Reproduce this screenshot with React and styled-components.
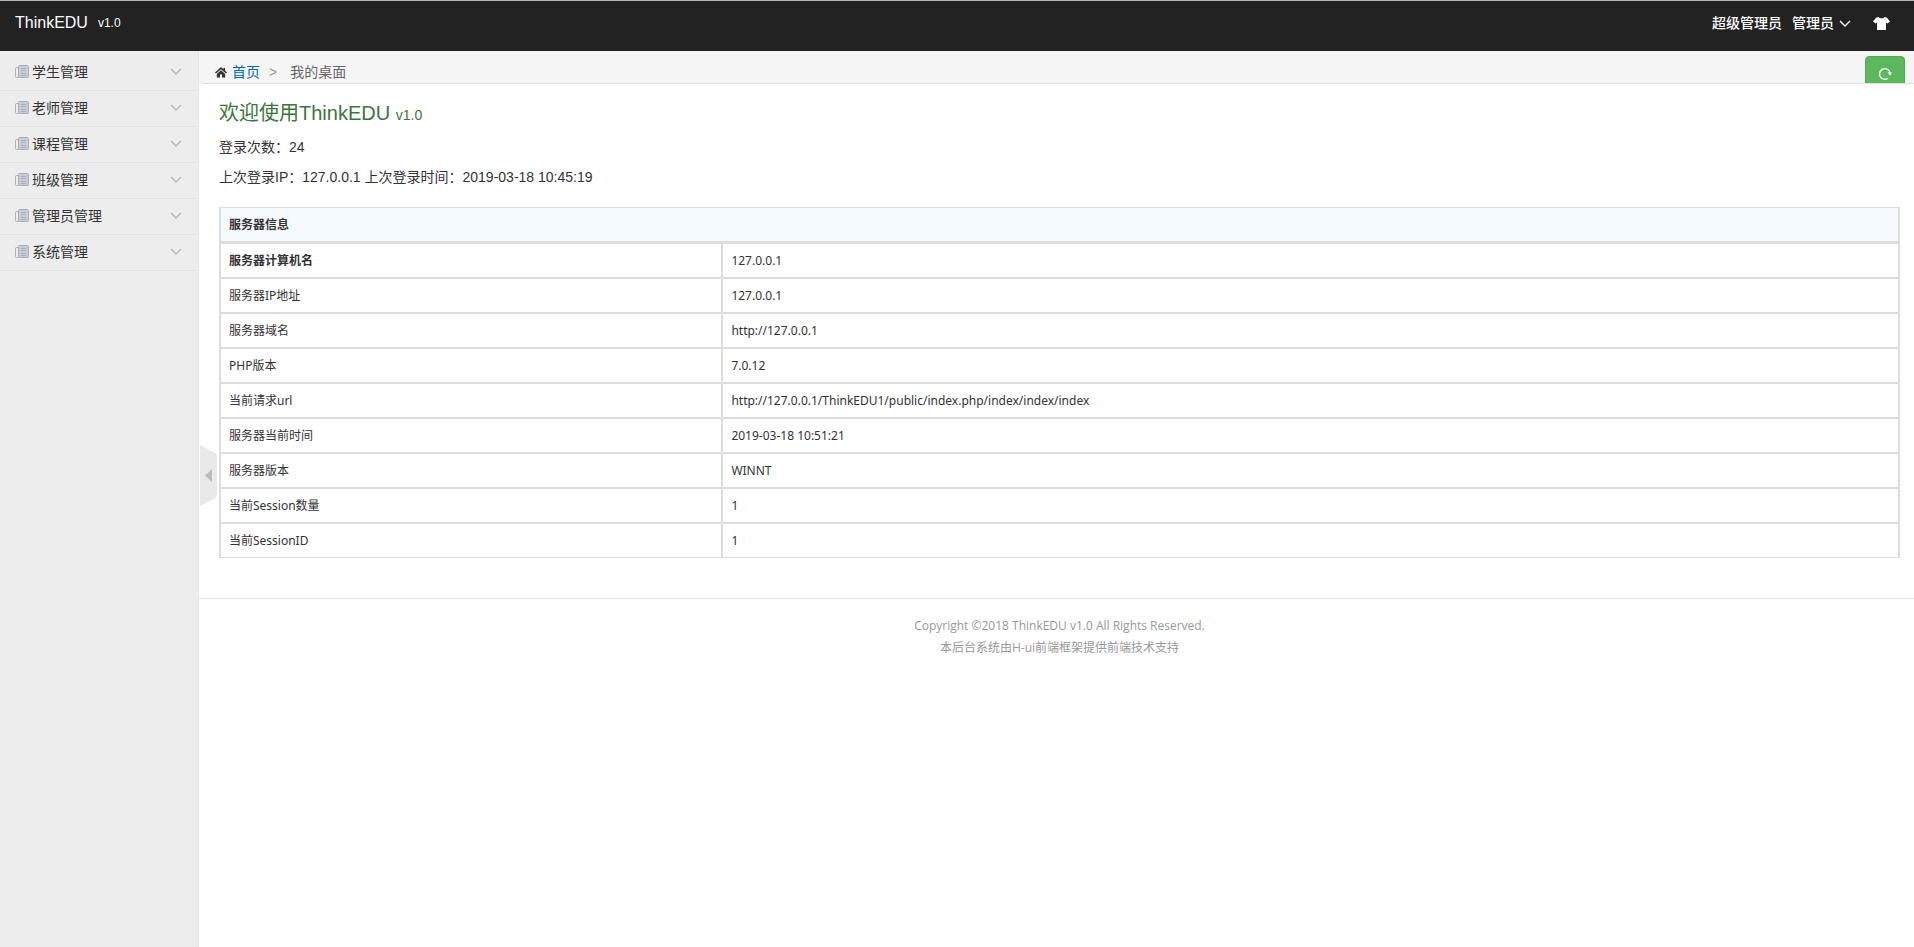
import React from "react";
import styled, { createGlobalStyle } from "styled-components";

const GlobalStyle = createGlobalStyle`
  * {
    box-sizing: border-box;
  }
  body {
    margin: 0;
    background: #fff;
    color: #333;
    font-family: "Liberation Sans", "Noto Sans CJK SC", sans-serif;
    font-size: 14px;
    line-height: 24px;
  }
  a {
    color: inherit;
    text-decoration: none;
  }
`;

const Page = styled.div`
  display: flex;
  flex-direction: column;
  min-height: 100vh;
`;

const Navbar = styled.header`
  display: flex;
  justify-content: space-between;
  height: 51px;
  padding: 6px 24px 0 15px;
  border-top: 1px solid #b4b4b4;
  background: #222;
  color: #fff;
`;

const Brand = styled.div`
  display: flex;
  align-items: center;
  gap: 10px;
  height: 32px;
`;

const Logo = styled.a`
  font-size: 16px;
`;

const Version = styled.span`
  font-size: 12px;
`;

const UserBar = styled.nav`
  display: flex;
  align-items: center;
  gap: 10px;
  height: 32px;
  font-weight: 500;
`;

const UserButton = styled.button`
  display: flex;
  align-items: center;
  gap: 5px;
  padding: 0;
  border: none;
  background: none;
  color: #fff;
  font: inherit;
`;

const SkinButton = styled(UserButton)`
  margin-left: 12px;
`;

const Body = styled.div`
  display: flex;
  flex: 1;
`;

const Sidebar = styled.aside`
  flex: none;
  width: 199px;
  padding-top: 4px;
  border-right: 1px solid #e5e5e5;
  background: #ededed;
`;

const MenuItem = styled.button`
  display: flex;
  align-items: center;
  width: 100%;
  height: 36px;
  padding: 0 16px 2px 15px;
  border: none;
  border-bottom: 1px solid #e2e2e2;
  background: none;
  color: #333;
  font: inherit;
`;

const MenuLabel = styled.span`
  flex: 1;
  padding-left: 3px;
  text-align: left;
`;

const Main = styled.main`
  position: relative;
  flex: 1;
  min-width: 0;
`;

const Breadcrumb = styled.nav`
  display: flex;
  justify-content: space-between;
  height: 33px;
  padding: 0 9px 0 16px;
  overflow: hidden;
  border-bottom: 1px solid #e5e5e5;
  border-bottom-left-radius: 4px;
  background: #f5f5f5;
`;

const Crumbs = styled.div`
  display: flex;
  align-items: center;
  padding-top: 9px;
  height: 33px;
  color: #666;
`;

const HomeLink = styled.a`
  padding-left: 5px;
  color: #06c;
`;

const Separator = styled.span`
  padding: 0 13px 0 9px;
  color: #999;
`;

const RefreshButton = styled.button`
  flex: none;
  display: flex;
  justify-content: center;
  width: 40px;
  height: 34px;
  margin-top: 5px;
  padding: 10px 0 0;
  border: 1px solid #4cae4c;
  border-radius: 4px;
  background: #5cb85c;
  color: #fff;
`;

const Content = styled.article`
  padding: 14px 14px 40px 20px;
`;

const Welcome = styled.h1`
  margin: 0 0 4px;
  color: #3c763d;
  font-size: 20px;
  font-weight: 400;
  line-height: 31px;
`;

const Small = styled.span`
  font-size: 14px;
`;

const Line = styled.p`
  margin: 0 0 6px;
`;

const InfoTable = styled.table`
  width: 100%;
  margin-top: 18px;
  border: 1px solid #ddd;
  border-right-width: 2px;
  border-spacing: 0;
  table-layout: fixed;
  font-family: "Noto Sans", "Noto Sans CJK SC", sans-serif;
  font-size: 12px;
  line-height: 17px;
  text-align: left;
`;

const NameCol = styled.col`
  width: 30%;
`;

const Cell = styled.td`
  padding: 8px;
  border-bottom: 2px solid #ddd;

  tr:last-child > & {
    border-bottom: none;
  }
`;

const NameCell = styled(Cell)`
  border-left: 1px solid #ddd;
  border-right: 2px solid #ddd;
  font-weight: ${(props) => (props.$strong ? 700 : 400)};
`;

const HeadCell = styled.th`
  padding: 8px;
  border-left: 1px solid #ddd;
  border-bottom: 3px solid #ddd;
  background: #f5fafe;
`;

const Footer = styled.footer`
  padding: 16px 14px 16px 20px;
  border-top: 1px solid #e5e5e5;
  color: #999;
  font-family: "Open Sans", "Noto Sans CJK SC", sans-serif;
  font-size: 12px;
  line-height: 22px;
  text-align: center;
`;

// the handle that folds the side menu, lies over the content's left edge
const FoldHandle = styled.button`
  position: absolute;
  left: 1px;
  top: 394px;
  padding: 0;
  border: none;
  background: none;
  line-height: 0;
`;

const ChevronIcon = ({ color }) => (
  <svg width="12" height="7" viewBox="0 0 12 7" fill="none" stroke={color} strokeWidth="1.4">
    <path d="M1 1l5 5 5-5" />
  </svg>
);

const NewsIcon = () => (
  <svg width="14" height="14" viewBox="0 0 14 14" fill="none" stroke="#a9b0ba">
    <path d="M3.5 2.5h-2a1 1 0 0 0-1 1v8a1 1 0 0 0 1 1h2" />
    <rect x="3.5" y="0.5" width="10" height="12" rx="1" fill="#c9cdd3" />
    <path d="M6 3.500h5M6 5.500h5M6 8.500h5M6 10.500h5" />
  </svg>
);

const HomeIcon = () => (
  <svg width="12" height="11" viewBox="0 0 12 11" fill="#333">
    <path d="M6 0L0 5.400l1 1.200L6 2.200l5 4.400 1-1.200L10 3.600V1H8.500v1.300z" />
    <path d="M6 3.300L1.800 7v3.500H5v-3h2v3h3.200V7z" />
  </svg>
);

const ShirtIcon = () => (
  <svg width="17" height="13" viewBox="0 0 17 13" fill="#fff">
    <path d="M5.500 0c1 1.700 5 1.700 6 0L14 .8l3 3.600-2.500 2.200L13 5.500V13H4V5.500L2.500 6.600 0 4.400 3 .8z" />
  </svg>
);

const RefreshIcon = () => (
  <svg width="14" height="14" viewBox="0 0 14 14" fill="none" stroke="#fff" strokeWidth="1.4">
    <path d="M10 11.200A5.300 5.300 0 1 1 12 6" />
    <path d="M9.500 5.400H14L12 8.400z" fill="#fff" stroke="none" />
  </svg>
);

const FoldIcon = () => (
  <svg width="17" height="61" viewBox="0 0 17 61">
    <path d="M0 0l15 8q2 1 2 3v39q0 2-2 3L0 61z" fill="#e9e9e9" />
    <path d="M12 24v13l-7-6.500z" fill="#bbb" />
  </svg>
);

const menu = ["学生管理", "老师管理", "课程管理", "班级管理", "管理员管理", "系统管理"];

const serverInfo = [
  ["服务器计算机名", "127.0.0.1"],
  ["服务器IP地址", "127.0.0.1"],
  ["服务器域名", "http://127.0.0.1"],
  ["PHP版本", "7.0.12"],
  ["当前请求url", "http://127.0.0.1/ThinkEDU1/public/index.php/index/index/index"],
  ["服务器当前时间", "2019-03-18 10:51:21"],
  ["服务器版本", "WINNT"],
  ["当前Session数量", "1"],
  ["当前SessionID", "1"],
];

const ServerTable = () => {
  return (
    <InfoTable>
      <colgroup>
        <NameCol />
        <col />
      </colgroup>
      <thead>
        <tr>
          <HeadCell colSpan={2}>服务器信息</HeadCell>
        </tr>
      </thead>
      <tbody>
        {serverInfo.map(([name, value], i) => (
          <tr key={name}>
            <NameCell as="th" scope="row" $strong={i === 0}>
              {name}
            </NameCell>
            <Cell>{value}</Cell>
          </tr>
        ))}
      </tbody>
    </InfoTable>
  );
};

export default function App() {
  return (
    <Page>
      <GlobalStyle />
      <Navbar>
        <Brand>
          <Logo href="#">ThinkEDU</Logo>
          <Version>v1.0</Version>
        </Brand>
        <UserBar>
          <span>超级管理员</span>
          <UserButton>
            管理员
            <ChevronIcon color="#fff" />
          </UserButton>
          <SkinButton aria-label="换肤">
            <ShirtIcon />
          </SkinButton>
        </UserBar>
      </Navbar>
      <Body>
        <Sidebar>
          {menu.map((label) => (
            <MenuItem key={label}>
              <NewsIcon />
              <MenuLabel>{label}</MenuLabel>
              <ChevronIcon color="#b5b5b5" />
            </MenuItem>
          ))}
        </Sidebar>
        <Main>
          <Breadcrumb>
            <Crumbs>
              <HomeIcon />
              <HomeLink href="#">首页</HomeLink>
              <Separator>&gt;</Separator>
              <span>我的桌面</span>
            </Crumbs>
            <RefreshButton aria-label="刷新">
              <RefreshIcon />
            </RefreshButton>
          </Breadcrumb>
          <Content>
            <Welcome>
              欢迎使用ThinkEDU <Small>v1.0</Small>
            </Welcome>
            <Line>登录次数：24</Line>
            <Line>上次登录IP：127.0.0.1 上次登录时间：2019-03-18 10:45:19</Line>
            <ServerTable />
          </Content>
          <Footer>
            Copyright ©2018 ThinkEDU v1.0 All Rights Reserved.
            <br />
            本后台系统由H-ui前端框架提供前端技术支持
          </Footer>
          <FoldHandle aria-label="收起菜单">
            <FoldIcon />
          </FoldHandle>
        </Main>
      </Body>
    </Page>
  );
}
